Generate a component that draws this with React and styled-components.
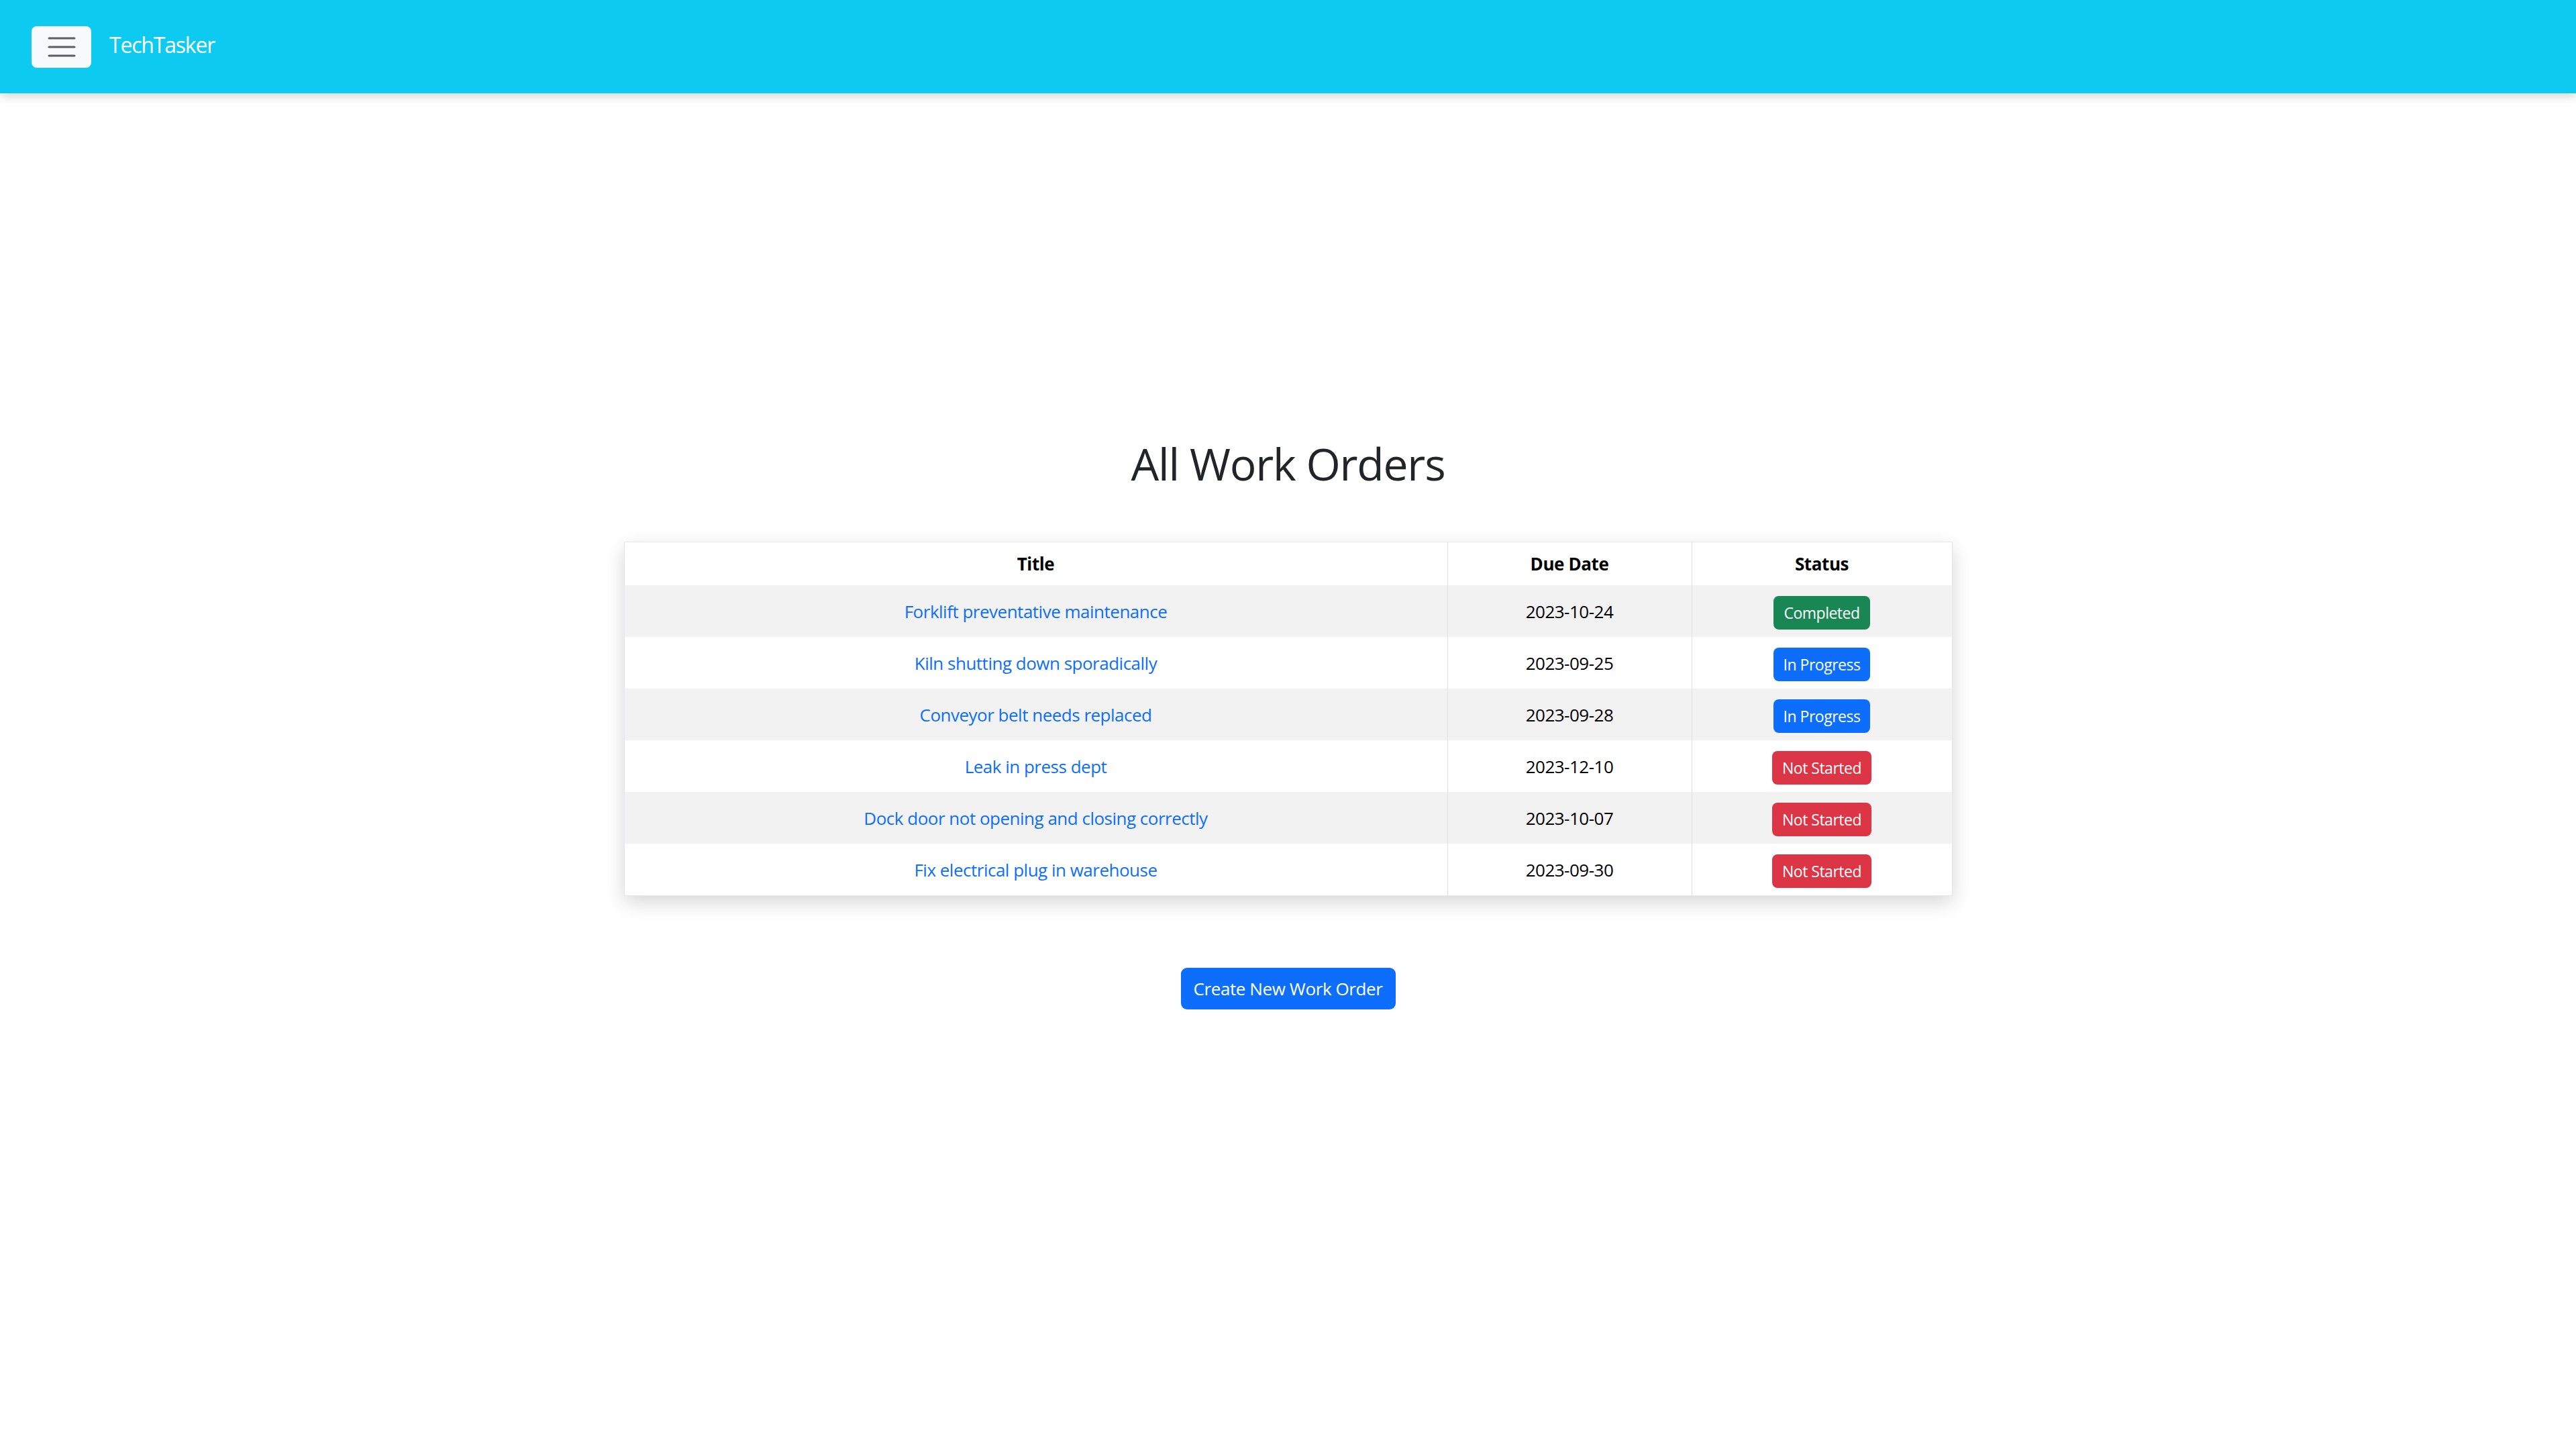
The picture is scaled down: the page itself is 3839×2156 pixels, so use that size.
import React from 'react';
import styled, { createGlobalStyle } from 'styled-components';

const GlobalStyle = createGlobalStyle`
  body {
    margin: 0;
    background: #fff;
    font-family: "Open Sans", "Noto Sans", sans-serif;
    color: #212529;
  }
`;

const Navbar = styled.nav`
  height: 139px;
  background: #0dcaf0;
  display: flex;
  align-items: center;
  padding: 0 0 0 47px;
  gap: 27px;
  box-shadow: 0 4px 14px rgba(0, 0, 0, 0.18);
  position: relative;
  z-index: 1;
`;

const Toggler = styled.button`
  width: 89px;
  height: 62px;
  margin-top: 1px;
  border: none;
  border-radius: 8px;
  background: #f8f9fa;
  display: flex;
  align-items: center;
  justify-content: center;
  padding: 0;
  cursor: pointer;
`;

const Brand = styled.a`
  color: #fff;
  font-size: 32px;
  letter-spacing: -1.2px;
  text-decoration: none;
  margin-top: -6px;
`;

const Main = styled.main`
  display: flex;
  flex-direction: column;
  align-items: center;
  padding-top: 511px;
`;

const Heading = styled.h1`
  margin: 0 0 77px;
  font-size: 66px;
  font-weight: 500;
  line-height: 80px;
  letter-spacing: -1.2px;
  color: #212529;
`;

const Table = styled.table`
  width: 1979px;
  border-collapse: collapse;
  border: 1px solid #e3e6ea;
  box-shadow: 0 10px 28px rgba(0, 0, 0, 0.16);
  table-layout: fixed;
  font-size: 26px;
`;

const HeadCell = styled.th`
  height: 64px;
  padding: 0;
  font-weight: 700;
  color: #000;
  text-align: center;
  border-left: 1px solid #dee2e6;
  letter-spacing: -0.4px;
  &:first-child { border-left: none; }
`;

const Row = styled.tr`
  background: ${props => (props.striped ? '#f2f2f2' : '#fff')};
`;

const Cell = styled.td`
  height: 77px;
  padding: 0;
  text-align: center;
  color: #000;
  border-left: 1px solid #dee2e6;
  letter-spacing: -0.5px;
  &:first-child { border-left: none; }
`;

const TitleLink = styled.a`
  color: #0d6efd;
  text-decoration: none;
`;

const badgeColors = {
  'Completed': '#198754',
  'In Progress': '#0d6efd',
  'Not Started': '#dc3545',
};

const Badge = styled.span`
  display: inline-block;
  padding: 0 15px;
  height: 50px;
  line-height: 50px;
  border-radius: 8px;
  background: ${props => badgeColors[props.status]};
  color: #fff;
  font-size: 23px;
  letter-spacing: -0.5px;
  margin-top: 4px;
`;

const CreateButton = styled.button`
  margin-top: 107px;
  width: 320px;
  height: 62px;
  border: none;
  border-radius: 9px;
  background: #0d6efd;
  color: #fff;
  font-family: inherit;
  font-size: 26px;
  letter-spacing: -0.4px;
  cursor: pointer;
`;

const orders = [
  { title: 'Forklift preventative maintenance', due: '2023-10-24', status: 'Completed' },
  { title: 'Kiln shutting down sporadically', due: '2023-09-25', status: 'In Progress' },
  { title: 'Conveyor belt needs replaced', due: '2023-09-28', status: 'In Progress' },
  { title: 'Leak in press dept', due: '2023-12-10', status: 'Not Started' },
  { title: 'Dock door not opening and closing correctly', due: '2023-10-07', status: 'Not Started' },
  { title: 'Fix electrical plug in warehouse', due: '2023-09-30', status: 'Not Started' },
];

const Hamburger = () => (
  <svg width="42" height="32" viewBox="0 0 42 32">
    <g stroke="#5b5f64" strokeWidth="3" strokeLinecap="round">
      <line x1="2" y1="3" x2="40" y2="3" />
      <line x1="2" y1="16" x2="40" y2="16" />
      <line x1="2" y1="29" x2="40" y2="29" />
    </g>
  </svg>
);

const App = () => {
  return (
    <>
      <GlobalStyle />
      <Navbar>
        <Toggler aria-label="Toggle navigation">
          <Hamburger />
        </Toggler>
        <Brand href="#">TechTasker</Brand>
      </Navbar>
      <Main>
        <Heading>All Work Orders</Heading>
        <Table>
          <colgroup>
            <col style={{ width: '1227px' }} />
            <col style={{ width: '364px' }} />
            <col style={{ width: '388px' }} />
          </colgroup>
          <thead>
            <tr>
              <HeadCell>Title</HeadCell>
              <HeadCell>Due Date</HeadCell>
              <HeadCell>Status</HeadCell>
            </tr>
          </thead>
          <tbody>
            {orders.map((o, i) => (
              <Row key={o.title} striped={i % 2 === 0}>
                <Cell><TitleLink href="#">{o.title}</TitleLink></Cell>
                <Cell>{o.due}</Cell>
                <Cell><Badge status={o.status}>{o.status}</Badge></Cell>
              </Row>
            ))}
          </tbody>
        </Table>
        <CreateButton>Create New Work Order</CreateButton>
      </Main>
    </>
  );
};

export default App;
